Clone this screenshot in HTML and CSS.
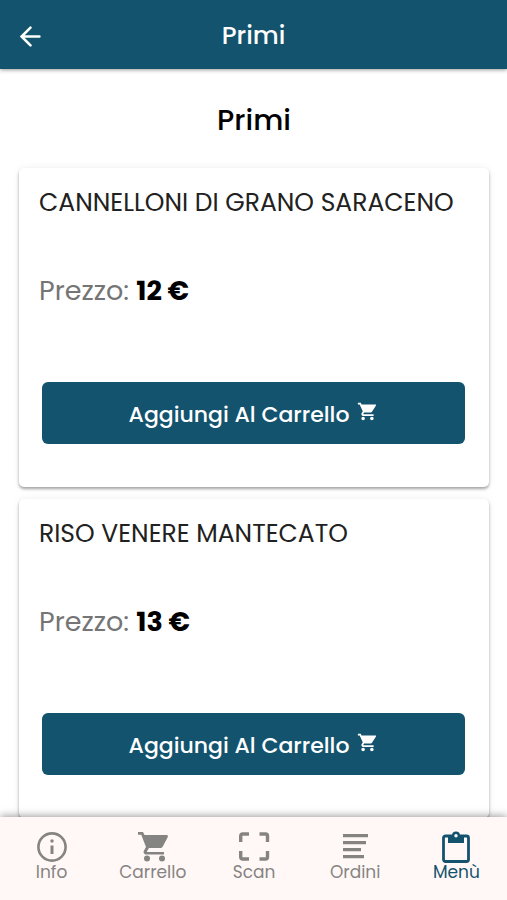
FILE: index.html
```html
<!DOCTYPE html>
<html lang="it">
<head>
<meta charset="utf-8">
<meta name="viewport" content="width=device-width, initial-scale=1">
<title>Primi</title>
<link rel="stylesheet" href="styles.css">
</head>
<body>
<svg class="sprite" aria-hidden="true">
  <symbol id="cart" viewBox="0 0 24 24"><path d="M7 18c-1.100 0-2 .9-2 2s.9 2 2 2 2-.9 2-2-.9-2-2-2zM1 2v2h2l3.600 7.600-1.400 2.400C4.500 15.400 5.500 17 7 17h12v-2H7.400a.25.25 0 0 1-.2-.4L8.100 13h7.500c.7 0 1.400-.4 1.700-1L21.700 5c.4-.5 0-1-.7-1H5.200l-.9-2H1zm16 16c-1.100 0-2 .9-2 2s.9 2 2 2 2-.9 2-2-.9-2-2-2z"/></symbol>
</svg>
<header class="topbar">
  <a class="back" href="#" aria-label="Indietro">
    <svg viewBox="0 0 20 20"><path d="M18.500 10H2M10 1.500 1.500 10l8.500 8.500"/></svg>
  </a>
  <span class="topbar-title">Primi</span>
</header>
<main class="content">
  <h1 class="heading">Primi</h1>
  <article class="card">
    <h2 class="dish">CANNELLONI DI GRANO SARACENO</h2>
    <p class="price">Prezzo: <strong>12 €</strong></p>
    <button class="add" type="button">Aggiungi Al Carrello <svg class="add-icon"><use href="#cart"/></svg></button>
  </article>
  <article class="card">
    <h2 class="dish">RISO VENERE MANTECATO</h2>
    <p class="price">Prezzo: <strong>13 €</strong></p>
    <button class="add" type="button">Aggiungi Al Carrello <svg class="add-icon"><use href="#cart"/></svg></button>
  </article>
</main>
<nav class="tabs">
  <a class="tab" href="#">
    <svg class="tab-icon" viewBox="0 0 32 32"><g fill="none" stroke="currentColor" stroke-width="2.600"><circle cx="16" cy="16" r="13.600"/><path stroke-width="3" d="M16 14.500V23"/></g><circle cx="16" cy="10" r="1.700"/></svg>
    <span>Info</span>
  </a>
  <a class="tab" href="#">
    <svg class="tab-icon" viewBox="0 0 32 32"><path d="M1 1h5l1.500 3H30q1.500.5.800 2l-5 9.500q-.8 1.500-2.500 1.500H12l-2 3.200q-.2.800.6.800H27v2.500H9.500c-2.500 0-3.500-2-2.500-4l2-3.500L4.200 3.800H1z"/><circle cx="10" cy="27.500" r="3"/><circle cx="25" cy="27.500" r="3"/></svg>
    <span>Carrello</span>
  </a>
  <a class="tab" href="#">
    <svg class="tab-icon" viewBox="0 0 32 32"><path fill="none" stroke="currentColor" stroke-width="3.400" d="M2.700 11V5q0-2 2-2H11M21.500 3h6q2 0 2 2v6M29.500 20v6q0 2-2 2h-6M11 28H4.700q-2 0-2-2v-6"/></svg>
    <span>Scan</span>
  </a>
  <a class="tab" href="#">
    <svg class="tab-icon" viewBox="0 0 32 32"><path d="M4 3h25v3.200H4zM4 10h23v3.200H4zM4 17h18v3.200H4zM4 24h21v3.200H4z"/></svg>
    <span>Ordini</span>
  </a>
  <a class="tab tab-active" href="#" aria-current="page">
    <svg class="tab-icon" viewBox="0 0 32 32"><rect x="3.500" y="5" width="25" height="25.500" rx="2" fill="none" stroke="currentColor" stroke-width="2.800"/><path d="M8 4.500h4a4 4 0 0 1 8 0h4V12H8z"/><circle class="hole" cx="16" cy="4.700" r="1.700"/></svg>
    <span>Menù</span>
  </a>
</nav>
</body>
</html>
```
FILE: styles.css
```css
* { box-sizing: border-box; }
body {
  margin: 0;
  height: 100vh;
  display: flex;
  flex-direction: column;
  background: #fff;
  color: #000;
  font-family: Poppins, Inter, sans-serif;
}
h1, h2, p { margin: 0; font-weight: 500; }
a { color: inherit; text-decoration: none; }
svg { fill: currentColor; }
.sprite { display: none; }
.topbar {
  flex: none;
  display: grid;
  grid-template-columns: 1fr auto 1fr;
  align-items: center;
  height: 69px;
  padding: 2px 20px 0;
  background: #13536e;
  color: #fff;
  box-shadow: 0 1px 4px rgba(0, 0, 0, .4);
  z-index: 1;
}
.back { width: 22px; height: 20px; }
.back svg {
  display: block;
  width: 21px;
  height: 21px;
  fill: none;
  stroke: currentColor;
  stroke-width: 2.4;
  stroke-linecap: round;
}
.topbar-title { font-size: 25px; font-weight: 500; line-height: 32px; }
.content {
  flex: 1;
  min-height: 0;
  overflow-y: auto;
  scrollbar-width: none;
  padding: 32px 18px 12px 19px;
}
.heading {
  margin-bottom: 28px;
  font-size: 29px;
  line-height: 39px;
  text-align: center;
}
.card {
  margin-bottom: 12px;
  padding: 16px 20px 43px;
  border-radius: 5px;
  background: #fff;
  box-shadow: 0 2px 3px rgba(0, 0, 0, .34), 0 0 8px rgba(0, 0, 0, .06);
}
.dish { color: #212121; font-size: 25px; font-weight: 400; line-height: 38px; }
.price {
  margin: 50px 0 72px;
  color: #757575;
  font-size: 27px;
  font-weight: 400;
  line-height: 38px;
}
.price strong { color: #000; font-weight: 700; }
.add {
  display: flex;
  justify-content: center;
  align-items: center;
  gap: 8px;
  width: calc(100% - 7px);
  height: 62px;
  margin: 0 4px 0 3px;
  padding: 3px 0 0;
  border: 0;
  border-radius: 6px;
  background: #13536e;
  color: #fff;
  font: 500 22px/32px Poppins, Inter, sans-serif;
}
.add-icon { width: 21px; height: 21px; margin-bottom: 7px; }
.tabs {
  flex: none;
  display: grid;
  grid-template-columns: repeat(5, 1fr);
  height: 83px;
  padding: 14px 0 0 1px;
  background: #fff8f7;
  color: #868483;
  box-shadow: 0 -1px 8px rgba(0, 0, 0, .4);
  z-index: 1;
}
.tab {
  display: flex;
  flex-direction: column;
  align-items: center;
  font-size: 17px;
  line-height: 20px;
}
.tab-icon { flex: none; width: 32px; height: 32px; }
.tab span { margin-top: -1px; }
.tab-active { color: #13536e; }
.hole { fill: #fff8f7; }
```
